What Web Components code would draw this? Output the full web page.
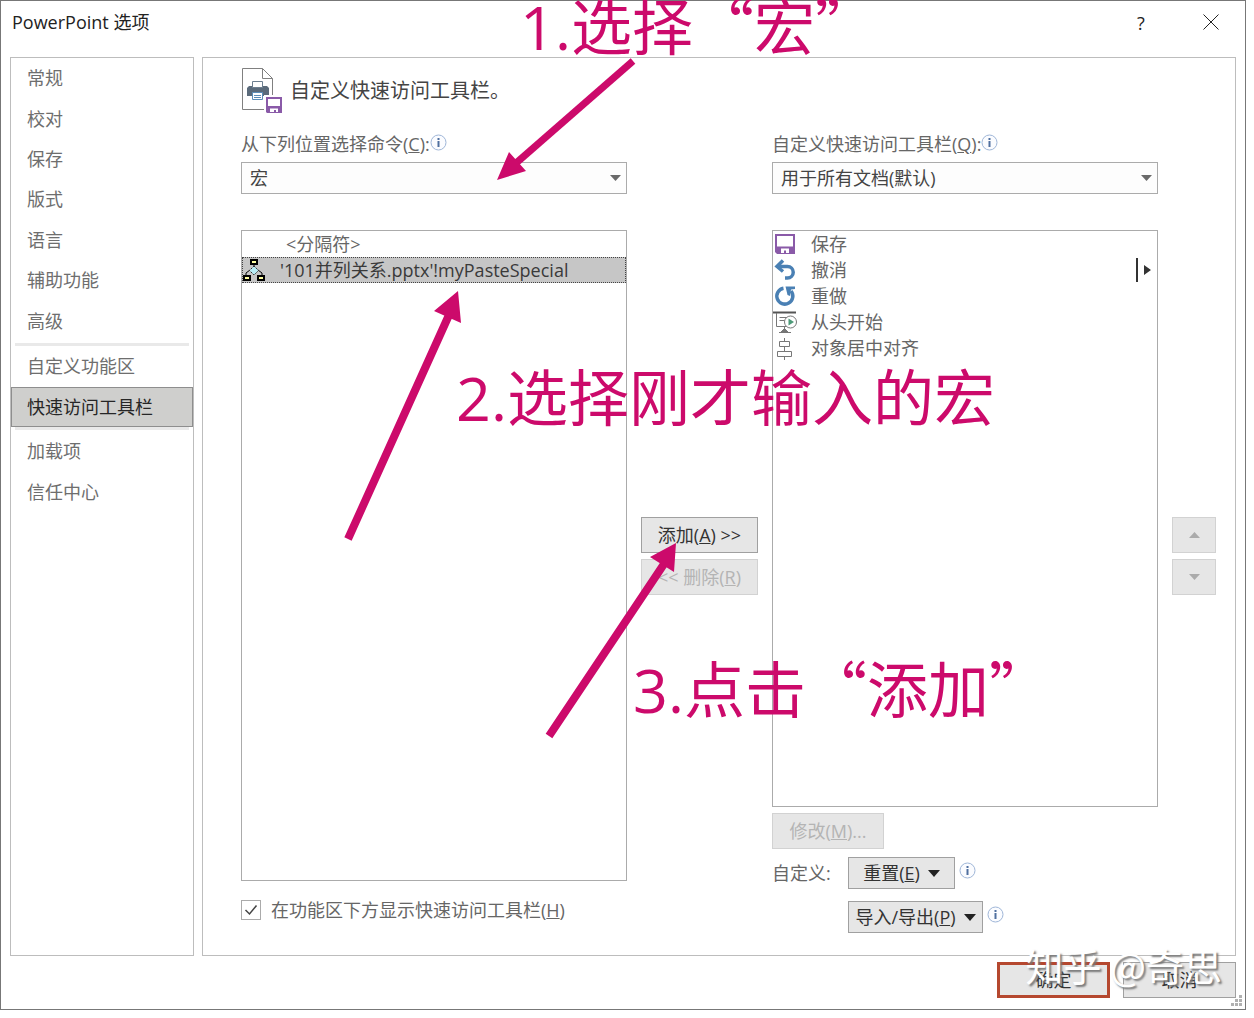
<!DOCTYPE html>
<html lang="zh-CN">
<head>
<meta charset="utf-8">
<title>PowerPoint 选项</title>
<style>
    body {
        margin: 0;
        background: #fff;
        font-family: "Open Sans", "Noto Sans CJK SC", sans-serif;
        font-size: 18px;
        line-height: 26px;
        color: #666;
    }
</style>
</head>
<body>
<options-dialog></options-dialog>

<script>
const saveIcon = `
    <svg width="20" height="20" viewBox="0 0 20 20">
        <path fill="#8a5aa8" d="M0 0h20v20H2l-2-2z"/>
        <path fill="#fff" d="M2 2h16v10.500H2z"/>
        <path fill="#fff" d="M6 14.500h8V19h-3v-2.500H9V19H6z"/>
    </svg>`;

const icons = {
    save: saveIcon,
    undo: `
    <svg width="24" height="24" viewBox="0 0 24 24" fill="none" stroke="#4a80b4">
        <path stroke-width="3.500" d="M4 8.500h10.500a5.700 5.700 0 0 1 0 11.500H12"/>
        <path stroke-width="3.500" d="M10 2.500L4 8.500l6 5"/>
    </svg>`,
    redo: `
    <svg width="24" height="24" viewBox="0 0 24 24">
        <path fill="none" stroke="#4a80b4" stroke-width="3.500" d="M10.500 4.200A8 8 0 1 0 18 7"/>
        <path fill="#4a80b4" d="M12.500 2.500H22V5l-4 .5-1 6.500-2.500-1z"/>
    </svg>`,
    slideshow: `
    <svg width="24" height="24" viewBox="0 0 24 24" fill="none" stroke="#777">
        <path stroke="#555" stroke-width="2" d="M0 2.500h23"/>
        <path d="M3.500 3v13.500H14M6.500 7.500h8M6.500 10.500h5M11.500 17v3M6 22.500h12"/>
        <path fill="#777" d="M8 22l3.500-3.500L15 22z"/>
        <circle cx="17.500" cy="12" r="6" fill="#fff"/>
        <path fill="#4d9a78" stroke="none" d="M15.500 8.500l5.500 3.500-5.500 3.500z"/>
    </svg>`,
    align: `
    <svg width="24" height="24" viewBox="0 0 24 24" fill="none" stroke="#777">
        <path d="M11.500 2v3M6.500 5.500h10v5h-10zM11.500 11v4M4.500 15.500h14v5h-14zM11.500 21v3"/>
    </svg>`,
    macro: `
    <svg width="24" height="24" viewBox="0 0 24 24">
        <path fill="none" stroke="#000" d="M12 6v4M8 12l-4 3v3M16 12l4 3v3"/>
        <path fill="#b7ecf5" stroke="#333" stroke-dasharray="2 1" d="M12 8l4.500 4.500L12 17l-4.500-4.500z"/>
        <path fill="#ffffa0" stroke="#000" stroke-width="2" d="M9 2h6v4H9zM2 18h6v4H2zM16 18h6v4h-6z"/>
    </svg>`
};

class InfoTip extends HTMLElement {

    constructor() {
        super();
        this.shadowDOM = this.attachShadow({ mode: "open" });
    }

    connectedCallback() {
        this.shadowDOM.innerHTML = `
        <style>
        :host {
            display: block;
            width: 17px;
            height: 17px;
        }

        svg {
            display: block;
        }
        </style>
        <svg width="17" height="17" viewBox="0 0 17 17">
            <circle cx="8.500" cy="8.500" r="7.500" fill="#fbfcff" stroke="#9fb6d8"/>
            <path fill="#4f6f9f" d="M7.500 4h2v2h-2zM7.500 7h2v6h-2z"/>
        </svg>
        `;
    }
}

class NavGroup extends HTMLElement {

    constructor() {
        super();
        this.shadowDOM = this.attachShadow({ mode: "open" });
    }

    connectedCallback() {
        this.shadowDOM.innerHTML = `
        <style>
        :host {
            display: grid;
            grid-auto-rows: 1fr;
        }
        </style>
        <slot></slot>
        `;
    }
}

class NavItem extends HTMLElement {

    constructor() {
        super();
        this.shadowDOM = this.attachShadow({ mode: "open" });
    }

    connectedCallback() {
        this.shadowDOM.innerHTML = `
        <style>
        :host {
            display: grid;
        }

        a {
            display: flex;
            align-items: center;
            padding: 0 15px;
            border: 1px solid transparent;
            color: #6e6e6e;
            text-decoration: none;
        }

        :host([selected]) a {
            background: #cfcfcd;
            border-color: #8e8e8e;
            color: #262626;
        }
        </style>
        <a href="#"><slot></slot></a>
        `;
    }
}

class PushButton extends HTMLElement {

    constructor() {
        super();
        this.shadowDOM = this.attachShadow({ mode: "open" });
    }

    connectedCallback() {
        const disabled = this.hasAttribute("disabled") ? "disabled" : "";
        const name = this.getAttribute("label");
        const caret = this.hasAttribute("menu")
            ? `<svg width="12" height="7" viewBox="0 0 12 7"><path fill="#222" d="M0 0h12L6 7z"/></svg>`
            : "";

        this.shadowDOM.innerHTML = `
        <style>
        :host {
            display: grid;
            height: 36px;
        }

        :host([menu]) {
            height: 32px;
        }

        button {
            display: flex;
            align-items: center;
            justify-content: center;
            gap: 8px;
            margin: 0;
            padding: 0 4px;
            border: 1px solid #a0a0a0;
            border-radius: 0;
            background: #e6e6e6;
            color: #333;
            font: inherit;
            white-space: nowrap;
        }

        button:disabled {
            border-color: #d2d2d2;
            color: #b4b4b4;
        }

        :host([primary]) button {
            border: 3px solid #b5482f;
        }
        </style>
        <button type="button" ${disabled} ${name ? `aria-label="${name}"` : ""}><span><slot></slot></span>${caret}</button>
        `;
    }
}

class ComboBox extends HTMLElement {

    constructor() {
        super();
        this.shadowDOM = this.attachShadow({ mode: "open" });
    }

    connectedCallback() {
        this.shadowDOM.innerHTML = `
        <style>
        :host {
            display: block;
        }

        .caption {
            display: flex;
            height: 28px;
            margin-bottom: 4px;
        }

        .caption label {
            margin-top: 1px;
        }

        .caption info-tip {
            margin-top: 4px;
        }

        .field {
            display: grid;
            align-items: center;
        }

        select, svg {
            grid-area: 1 / 1;
        }

        select {
            appearance: none;
            width: 100%;
            height: 32px;
            padding: 0 8px;
            border: 1px solid #ababab;
            border-radius: 0;
            background: #fdfdfd;
            color: #444;
            font: inherit;
        }

        svg {
            justify-self: end;
            margin-right: 6px;
            pointer-events: none;
        }
        </style>
        <div class="caption">
            <label for="choice"><slot></slot></label>
            <info-tip></info-tip>
        </div>
        <div class="field">
            <select id="choice"><option>${this.getAttribute("value")}</option></select>
            <svg width="11" height="6" viewBox="0 0 11 6"><path fill="#6a6a6a" d="M0 0h11L5.500 6z"/></svg>
        </div>
        `;
    }
}

class CommandList extends HTMLElement {

    constructor() {
        super();
        this.shadowDOM = this.attachShadow({ mode: "open" });
    }

    connectedCallback() {
        this.setAttribute("role", "listbox");
        this.shadowDOM.innerHTML = `
        <style>
        :host {
            display: block;
            border: 1px solid #ababab;
            background: #fff;
        }
        </style>
        <slot></slot>
        `;
    }
}

class CommandItem extends HTMLElement {

    constructor() {
        super();
        this.shadowDOM = this.attachShadow({ mode: "open" });
    }

    connectedCallback() {
        const flyout = this.hasAttribute("flyout")
            ? `<svg class="flyout" width="16" height="24" viewBox="0 0 16 24"><path fill="#333" d="M1 0h2v24H1zM9 7l7 5-7 5z"/></svg>`
            : "";

        this.setAttribute("role", "option");
        this.shadowDOM.innerHTML = `
        <style>
        :host {
            display: flex;
            align-items: center;
            height: 26px;
            box-sizing: border-box;
            padding-right: 6px;
            gap: 14px;
        }

        :host([selected]) {
            background: #c6c6c6;
            outline: 1px dotted #444;
            outline-offset: -1px;
            color: #3a3a3a;
        }

        .icon {
            display: grid;
            place-items: center;
            width: 24px;
            height: 24px;
        }

        .text {
            flex: 1;
            white-space: nowrap;
        }

        :host([divider]) .text {
            padding-left: 6px;
        }
        </style>
        <span class="icon">${icons[this.getAttribute("icon")] || ""}</span>
        <span class="text"><slot></slot></span>
        ${flyout}
        `;
    }
}

class MarkerNotes extends HTMLElement {

    constructor() {
        super();
        this.shadowDOM = this.attachShadow({ mode: "open" });
    }

    connectedCallback() {
        this.shadowDOM.innerHTML = `
        <style>
        :host {
            position: absolute;
            inset: -1px;
            pointer-events: none;
            color: #cc0a6b;
            font-family: "Noto Sans CJK SC", sans-serif;
            font-size: 61px;
            line-height: 61px;
            white-space: nowrap;
        }

        svg, p {
            position: absolute;
            margin: 0;
        }

        svg {
            top: 0;
            left: 0;
        }

        .number {
            font-family: "Open Sans", sans-serif;
            line-height: 0;
        }

        .first {
            top: -7px;
            left: 520px;
        }

        .second {
            top: 364px;
            left: 456px;
        }

        .third {
            top: 656px;
            left: 633px;
        }

        .mark {
            right: 24px;
            bottom: 26px;
            color: #fff;
            font-size: 38px;
            line-height: 38px;
            text-shadow: 2px 2px 2px #777;
        }
        </style>
        <svg width="1000" height="800" viewBox="0 0 1000 800" fill="#cc0a6b" stroke="#cc0a6b">
            <path stroke-width="7" d="M633 61L515 164"/>
            <path stroke-width="8" d="M348 539L449 315M549 736L664 564"/>
            <path stroke="none" d="M497 180l12-28 17 19zM458 291l-24 20 27 12zM676 543l-26 14 24 15z"/>
        </svg>
        <p class="first"><span class="number">1.</span>选择“宏”</p>
        <p class="second"><span class="number">2.</span>选择刚才输入的宏</p>
        <p class="third"><span class="number">3.</span>点击“添加”</p>
        <p class="mark">知乎 @奇思</p>
        `;
    }
}

class OptionsDialog extends HTMLElement {

    constructor() {
        super();
        this.shadowDOM = this.attachShadow({ mode: "open" });
    }

    connectedCallback() {
        this.render();
    }

    render() {
        this.shadowDOM.innerHTML = `
        <style>
        :host {
            display: grid;
            min-height: 100vh;
            box-sizing: border-box;
            padding: 0 8px 8px 0;
        }

        .window {
            position: relative;
            display: flex;
            flex-direction: column;
            border: 1px solid #777;
            background: #fff;
        }

        header {
            display: flex;
            align-items: center;
            height: 56px;
            box-sizing: border-box;
            padding: 0 22px 14px 11px;
            color: #222;
        }

        h1, h2 {
            flex: 1;
            margin: 0;
            font-size: 18px;
            font-weight: normal;
        }

        header button {
            display: grid;
            place-items: center;
            width: 24px;
            height: 24px;
            margin-left: 46px;
            padding: 0;
            border: 0;
            background: none;
            color: #222;
            font: inherit;
        }

        main {
            flex: 1;
            display: grid;
            grid-template-columns: 184px 1fr;
            gap: 8px;
            padding: 0 9px;
        }

        nav, section {
            border: 1px solid #bdbdbd;
        }

        .general {
            height: 283px;
            margin-bottom: 2px;
        }

        .custom {
            height: 81px;
        }

        .more {
            height: 82px;
        }

        hr {
            height: 3px;
            margin: 0 4px;
            border: 0;
            background: #e9e9e9;
        }

        section {
            display: flex;
            flex-direction: column;
            padding: 10px 19px 22px 38px;
        }

        .heading {
            display: flex;
            align-items: center;
            gap: 8px;
            height: 46px;
            margin-bottom: 16px;
            color: #444;
        }

        h2 {
            font-size: 20px;
        }

        .columns {
            flex: 1;
            display: grid;
            grid-template-columns: 1fr 117px 1fr 44px;
            grid-template-rows: auto 1fr 52px;
            column-gap: 14px;
        }

        combo-box {
            margin-bottom: 36px;
        }

        .source {
            grid-column: 1;
        }

        .target {
            grid-column: 3;
        }

        .commands {
            grid-area: 2 / 1;
        }

        .move, .order {
            grid-row: 2;
            align-self: center;
            display: grid;
            gap: 6px;
        }

        .order {
            grid-column: 4;
        }

        .toolbar {
            grid-area: 2 / 3 / 4;
            display: flex;
            flex-direction: column;
        }

        .toolbar command-list {
            flex: 1;
            margin-bottom: 6px;
        }

        .modify {
            width: 112px;
            margin-bottom: 8px;
        }

        .reset {
            display: grid;
            grid-template-columns: 76px 1fr;
            row-gap: 12px;
            align-items: center;
        }

        .reset div {
            grid-column: 2;
            display: flex;
            gap: 4px;
        }

        .reset info-tip {
            margin-top: 5px;
        }

        .restore {
            width: 107px;
        }

        .transfer {
            width: 135px;
        }

        .below {
            grid-area: 3 / 1;
            display: flex;
            align-items: center;
            gap: 10px;
            padding-top: 6px;
        }

        .check {
            display: grid;
        }

        .check > * {
            grid-area: 1 / 1;
        }

        .check svg {
            pointer-events: none;
        }

        input {
            appearance: none;
            width: 20px;
            height: 20px;
            margin: 0;
            border: 1px solid #ababab;
            background: #fff;
        }

        footer {
            display: grid;
            grid-template-columns: 113px 113px;
            justify-content: end;
            gap: 13px;
            padding: 6px 9px 11px;
        }

        .grip {
            position: absolute;
            right: 2px;
            bottom: 2px;
        }
        </style>

        <div class="window">
            <header>
                <h1>PowerPoint 选项</h1>
                <button type="button">?</button>
                <button type="button" aria-label="关闭">
                    <svg width="16" height="16" viewBox="0 0 16 16"><path stroke="#222" d="M.5.500l15 15M15.500.500l-15 15"/></svg>
                </button>
            </header>

            <main>
                <nav>
                    <nav-group class="general">
                        <nav-item>常规</nav-item>
                        <nav-item>校对</nav-item>
                        <nav-item>保存</nav-item>
                        <nav-item>版式</nav-item>
                        <nav-item>语言</nav-item>
                        <nav-item>辅助功能</nav-item>
                        <nav-item>高级</nav-item>
                    </nav-group>
                    <hr>
                    <nav-group class="custom">
                        <nav-item>自定义功能区</nav-item>
                        <nav-item selected>快速访问工具栏</nav-item>
                    </nav-group>
                    <hr>
                    <nav-group class="more">
                        <nav-item>加载项</nav-item>
                        <nav-item>信任中心</nav-item>
                    </nav-group>
                </nav>

                <section>
                    <div class="heading">
                        <svg width="41" height="46" viewBox="0 0 41 46">
                            <path fill="#fff" stroke="#808080" d="M1.500.500h20l10 10v31h-30z"/>
                            <path fill="none" stroke="#808080" d="M21.500.500v10h10"/>
                            <path fill="#5b6b7b" d="M6 20l2-2h18l2 2v8H6z"/>
                            <path fill="#fff" stroke="#6d7f90" d="M11.500 13.500h10v6h-10z"/>
                            <path fill="#fff" stroke="#5b8db8" d="M11.500 24.500h10v7h-10zM13 27.500h7M13 29.500h7"/>
                            <path fill="#fff" d="M23 27h18v19H23z"/>
                            <path fill="#8a5aa8" d="M25 29h16v16H26l-1-1z"/>
                            <path fill="#fff" d="M27 31h12v7H27zM29 40.500h8v3.500h-2v-2h-2v2h-4z"/>
                        </svg>
                        <h2>自定义快速访问工具栏。</h2>
                    </div>

                    <div class="columns">
                        <combo-box class="source" value="宏">从下列位置选择命令(<u>C</u>):</combo-box>
                        <combo-box class="target" value="用于所有文档(默认)">自定义快速访问工具栏(<u>Q</u>):</combo-box>

                        <command-list class="commands">
                            <command-item divider>&lt;分隔符&gt;</command-item>
                            <command-item icon="macro" selected>'101并列关系.pptx'!myPasteSpecial</command-item>
                        </command-list>

                        <div class="move">
                            <push-button>添加(<u>A</u>) &gt;&gt;</push-button>
                            <push-button disabled>&lt;&lt; 删除(<u>R</u>)</push-button>
                        </div>

                        <div class="toolbar">
                            <command-list>
                                <command-item icon="save">保存</command-item>
                                <command-item icon="undo" flyout>撤消</command-item>
                                <command-item icon="redo">重做</command-item>
                                <command-item icon="slideshow">从头开始</command-item>
                                <command-item icon="align">对象居中对齐</command-item>
                            </command-list>
                            <push-button class="modify" disabled>修改(<u>M</u>)...</push-button>
                            <div class="reset">
                                <span>自定义:</span>
                                <div>
                                    <push-button class="restore" menu>重置(<u>E</u>)</push-button>
                                    <info-tip></info-tip>
                                </div>
                                <div>
                                    <push-button class="transfer" menu>导入/导出(<u>P</u>)</push-button>
                                    <info-tip></info-tip>
                                </div>
                            </div>
                        </div>

                        <div class="order">
                            <push-button label="上移" disabled>
                                <svg width="11" height="6" viewBox="0 0 11 6" style="display: block"><path fill="#ababab" d="M0 6h11L5.500 0z"/></svg>
                            </push-button>
                            <push-button label="下移" disabled>
                                <svg width="11" height="6" viewBox="0 0 11 6" style="display: block"><path fill="#ababab" d="M0 0h11L5.500 6z"/></svg>
                            </push-button>
                        </div>

                        <div class="below">
                            <span class="check">
                                <input type="checkbox" id="below" checked>
                                <svg width="20" height="20" viewBox="0 0 20 20"><path fill="none" stroke="#444" stroke-width="1.500" d="M4.500 10l4 4 7-8.500"/></svg>
                            </span>
                            <label for="below">在功能区下方显示快速访问工具栏(<u>H</u>)</label>
                        </div>
                    </div>
                </section>
            </main>

            <footer>
                <push-button primary>确定</push-button>
                <push-button>取消</push-button>
            </footer>
            <svg class="grip" width="12" height="12" viewBox="0 0 12 12"><path fill="#b0b0b0" d="M8 0h3v3H8zM4 4h3v3H4zM8 4h3v3H8zM0 8h3v3H0zM4 8h3v3H4zM8 8h3v3H8z"/></svg>
            <marker-notes></marker-notes>
        </div>
        `;
    }
}

customElements.define("info-tip", InfoTip);
customElements.define("nav-group", NavGroup);
customElements.define("nav-item", NavItem);
customElements.define("push-button", PushButton);
customElements.define("combo-box", ComboBox);
customElements.define("command-list", CommandList);
customElements.define("command-item", CommandItem);
customElements.define("marker-notes", MarkerNotes);
customElements.define("options-dialog", OptionsDialog);
</script>
</body>
</html>
